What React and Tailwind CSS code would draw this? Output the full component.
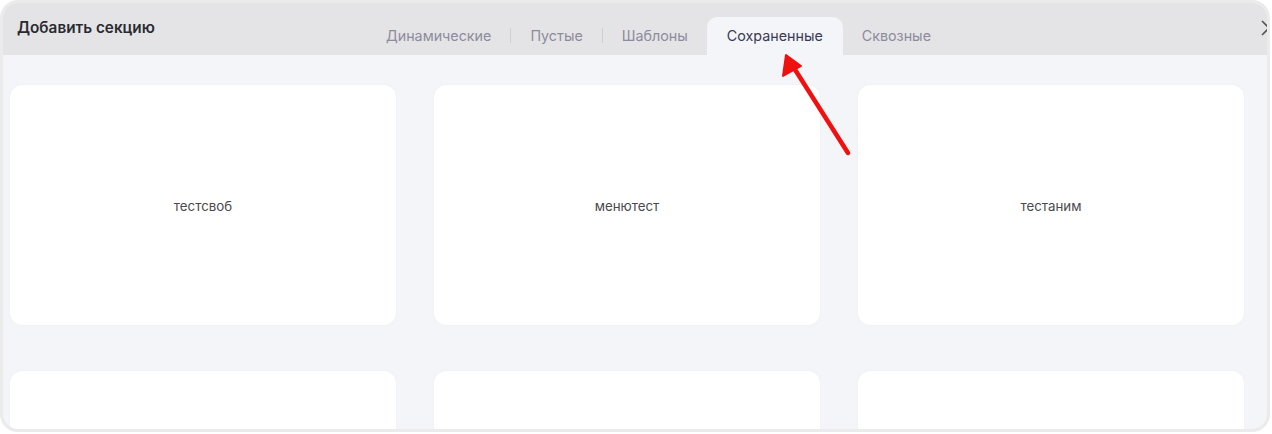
import React from "react";

const tabs = [
  { label: "Динамические", sep: true },
  { label: "Пустые", sep: true },
  { label: "Шаблоны", sep: false },
  { label: "Сохраненные", active: true, sep: false },
  { label: "Сквозные", sep: false },
];

function Card({ label }) {
  return (
    <div className="h-[240px] rounded-[12px] bg-white shadow-[0_0_2px_rgba(0,0,0,0.06)] flex items-center justify-center text-[13.3px] text-[#4a4a4e]">
      <span className="pt-[3px]">{label}</span>
    </div>
  );
}

export default function App() {
  return (
    <div className="w-[1272px] h-[434px] bg-white relative" style={{ fontFamily: "Inter, 'Noto Sans', sans-serif" }}>
      <div className="w-[1270px] h-[432px] rounded-[18px] border-[3px] border-[#ebebeb] overflow-hidden bg-[#f4f5f8] flex flex-col relative">
        <div className="h-[52px] shrink-0 bg-[#e4e4e7] flex relative">
          <div className="w-[364px] pl-[14px] pt-[16px] text-[15.3px] font-semibold text-[#2a2a30] leading-[18px]">
            Добавить секцию
          </div>
          <div className="flex items-end h-full">
            {tabs.map((t) => (
              <React.Fragment key={t.label}>
                <div
                  className={
                    t.active
                      ? "h-[38px] px-[20px] flex items-center rounded-t-[10px] bg-[#f4f5f8] text-[14.3px] text-[#3a3a55]"
                      : "h-[38px] px-[19px] flex items-center text-[14.3px] text-[#8c8c9c]"
                  }
                >
                  <span>{t.label}</span>
                </div>
                {t.sep && <div className="w-px h-[15px] bg-[#cfcfd4] mb-[12px]" />}
              </React.Fragment>
            ))}
          </div>
          <svg className="absolute left-[1258px] top-[17px]" width="16" height="16" viewBox="0 0 16 16">
            <path d="M1 1 L15 15 M15 1 L1 15" stroke="#555" strokeWidth="1.6" fill="none" />
          </svg>
        </div>
        <div className="flex-1 pl-[7px] pr-[23px] pt-[30px]">
          <div className="grid grid-cols-3 gap-x-[38px] gap-y-[46px]">
            <Card label="тестсвоб" />
            <Card label="менютест" />
            <Card label="тестаним" />
            <Card label="" />
            <Card label="" />
            <Card label="" />
          </div>
        </div>
      </div>
      <svg className="absolute left-0 top-0 pointer-events-none" width="1272" height="434">
        <line x1="848" y1="153" x2="794" y2="68" stroke="#f01010" strokeWidth="4.5" strokeLinecap="round" />
        <polygon points="786,55 783,76 801,66" fill="#f01010" stroke="#f01010" strokeWidth="2" strokeLinejoin="round" />
      </svg>
    </div>
  );
}
